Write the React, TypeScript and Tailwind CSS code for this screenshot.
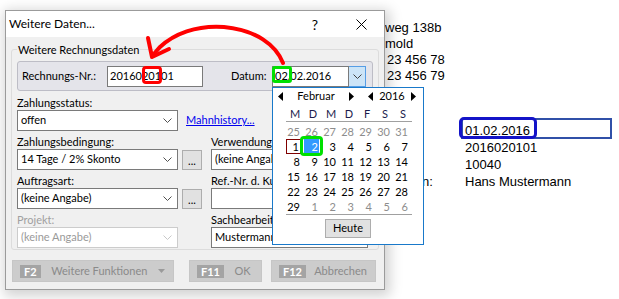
const Chevron = ({ className }: { className: string }) => (
  <svg width="9" height="5" viewBox="0 0 9 5" className={className}>
    <path d="M0.5 0.5 L4.5 4.5 L8.5 0.5" fill="none" stroke="currentColor" strokeWidth="1" />
  </svg>
);

const TriLeft = () => (
  <svg width="5" height="9" viewBox="0 0 5 9">
    <polygon points="5,0 0,4.5 5,9" fill="black" />
  </svg>
);

const TriRight = () => (
  <svg width="5" height="9" viewBox="0 0 5 9">
    <polygon points="0,0 5,4.5 0,9" fill="black" />
  </svg>
);

interface ComboProps {
  value: string;
  className: string;
  disabled?: boolean;
}

const Combo = ({ value, className, disabled = false }: ComboProps) => (
  <div
    className={`flex h-[21px] items-center border bg-white pl-[3px] pr-[5px] ${
      disabled ? 'border-[#cccccc] text-[#9a9a9a]' : 'border-[#7a7a7a] text-black'
    } ${className}`}
  >
    <span className="flex-1 truncate">{value}</span>
    <Chevron className={disabled ? 'text-[#c8c8c8]' : 'text-[#505050]'} />
  </div>
);

const DotsButton = () => (
  <div className="ml-[4px] flex h-[20px] w-[20px] items-center justify-center border border-[#adadad] bg-[#e1e1e1] pt-[2px] leading-none">
    ...
  </div>
);

const weeks = [
  [25, 26, 27, 28, 29, 30, 31],
  [1, 2, 3, 4, 5, 6, 7],
  [8, 9, 10, 11, 12, 13, 14],
  [15, 16, 17, 18, 19, 20, 21],
  [22, 23, 24, 25, 26, 27, 28],
  [29, 1, 2, 3, 4, 5, 6],
];

const Calendar = () => (
  <div className="absolute left-0 top-full z-20 flex h-[158px] w-[152px] flex-col border border-[#1979ca] bg-white">
    <div className="mt-[2px] flex h-[14px] items-center pl-[5px]">
      <TriLeft />
      <span className="w-[66px] text-center">Februar</span>
      <TriRight />
      <span className="ml-[14px] flex">
        <TriLeft />
      </span>
      <span className="w-[38px] text-center">2016</span>
      <TriRight />
    </div>

    {/* Wochentage */}
    <div className="ml-[13px] mt-[3px] grid h-[15px] w-[126px] grid-cols-7 border-b border-[#a0a0a0] leading-[14px] text-[#1c1c4c]">
      {['M', 'D', 'M', 'D', 'F', 'S', 'S'].map((d, i) => (
        <span key={i} className="text-center">
          {d}
        </span>
      ))}
    </div>

    <div className="ml-[13px] mt-[2px] w-[126px] border-b border-[#a0a0a0]">
      {weeks.map((week, w) => (
        <div key={w} className="grid h-[15px] grid-cols-7">
          {week.map((day, d) => {
            const other = w === 0 || (w === 5 && d > 0);
            const today = w === 1 && d === 0;
            const selected = w === 1 && d === 1;
            return (
              <div key={d} className="relative">
                <span
                  className={`block h-[15px] w-[15px] pr-[1px] text-right ${
                    today
                      ? 'border border-[#800000] leading-[13px]'
                      : selected
                        ? 'bg-[#3399ff] leading-[15px] text-white'
                        : other
                          ? 'leading-[15px] text-[#8d8d8d]'
                          : 'leading-[15px] text-black'
                  }`}
                >
                  {day}
                </span>
                {selected && (
                  <div className="absolute -bottom-[2px] -left-[4px] -top-[3px] right-[-1px] rounded-[4px] border-[3px] border-[#00e000]" />
                )}
              </div>
            );
          })}
        </div>
      ))}
    </div>

    <div className="mx-auto mt-[4px] flex h-[19px] w-[46px] items-center justify-center border border-[#adadad] bg-[#e1e1e1]">
      Heute
    </div>
  </div>
);

const KeyButton = ({ keyName, label, className, menu = false }: { keyName: string; label: string; className: string; menu?: boolean }) => (
  <div className={`flex h-[22px] items-center border border-[#c6c6c6] bg-[#cccccc] pl-[7px] text-[#8a8a8a] ${className}`}>
    <span className="h-[13px] bg-[#a4a4a4] px-[4px] text-[11px] font-bold leading-[13px] text-white">{keyName}</span>
    <span className="flex-1 text-center">{label}</span>
    {menu && (
      <svg width="7" height="4" viewBox="0 0 7 4" className="mr-[8px]">
        <polygon points="0,0 7,0 3.5,4" fill="#9a9a9a" />
      </svg>
    )}
  </div>
);

export default function App() {
  return (
    <div className="relative h-[299px] w-[619px] overflow-hidden bg-white">
      {/* Seite im Hintergrund */}
      <div className="pl-[385px] pt-[20px] font-[family-name:'Liberation_Sans',Arial,sans-serif] text-[13px] leading-[16px] text-black">
        <div>weg 138b</div>
        <div>mold</div>
        <div className="pl-[2px]">23 456 78</div>
        <div className="pl-[2px]">23 456 79</div>

        <div className="mt-[38px] grid grid-cols-[80px_1fr] leading-[17px]">
          <span />
          <span className="relative">
            <span className="absolute -left-[4px] -top-[4px] h-[21px] w-[151px] border-2 border-[#3050a8]" />
            <span className="absolute -left-[6px] -top-[5px] h-[22px] w-[78px] rounded-[5px] border-[3px] border-[#1414c8]" />
            <span className="relative">01.02.2016</span>
          </span>
          <span />
          <span>2016020101</span>
          <span />
          <span>10040</span>
          <span className="pl-[37px]">n:</span>
          <span>Hans Mustermann</span>
        </div>
      </div>

      {/* Dialog */}
      <div className="absolute left-[5px] top-[10px] z-10 flex h-[280px] w-[380px] flex-col border border-[#9b9b9b] bg-[#f0f0f0] font-[family-name:Lato,sans-serif] text-[11px] text-black shadow-[2px_3px_12px_3px_rgba(0,0,0,0.18)]">
        <div className="flex h-[26px] items-center bg-white pl-[3px]">
          <span className="flex-1 text-[12px]">Weitere Daten...</span>
          <span className="flex w-[46px] justify-center text-[14px]">?</span>
          <span className="flex w-[46px] justify-center">
            <svg width="11" height="11" viewBox="0 0 11 11">
              <path d="M0.5 0.5 L10.5 10.5 M10.5 0.5 L0.5 10.5" stroke="black" strokeWidth="1" />
            </svg>
          </span>
        </div>

        <fieldset className="mx-[5px] mt-[5px] rounded-[3px] border border-[#dcdcdc] px-[5px] pb-[1px]">
          <legend className="px-[1px] leading-[15px]">Weitere Rechnungsdaten</legend>

          {/* Rechnungs-Nr. / Datum */}
          <div className="mt-[4px] flex h-[30px] items-center rounded-[3px] border border-[#bdbdc6] bg-[#e4e4ea] pl-[4px]">
            <span className="w-[85px]">Rechnungs-Nr.:</span>
            <div className="relative flex h-[21px] w-[96px] items-center border border-[#7a7a7a] bg-white pl-[2px]">
              2016020101
              <div className="absolute -top-[1px] left-[34px] h-[18px] w-[20px] rounded-[4px] border-[3px] border-[#ff0000]" />
            </div>
            <span className="ml-[28px] w-[41px]">Datum:</span>
            <div className="relative flex h-[21px] w-[94px]">
              <div className="relative flex flex-1 items-center border border-[#7a7a7a] bg-white pl-[2px]">
                02.02.2016
                <div className="absolute -left-[1px] -top-[1px] h-[17px] w-[20px] rounded-[3px] border-[3px] border-[#00e000]" />
              </div>
              <div className="-ml-[1px] flex w-[18px] items-center justify-center border border-[#569de5] bg-[#cce4f7]">
                <Chevron className="text-[#404040]" />
              </div>
              <Calendar />
            </div>
          </div>

          {/* Zahlungsstatus */}
          <div className="mt-[5px] flex">
            <div className="w-[185px]">
              <div className="h-[14px] leading-[14px]">Zahlungsstatus:</div>
              <div className="flex items-center">
                <Combo value="offen" className="w-[161px] shrink-0" />
                <span className="ml-[8px] whitespace-nowrap text-[#0000ee] underline">Mahnhistory...</span>
              </div>
            </div>
          </div>

          {/* Zahlungsbedingung / Verwendung */}
          <div className="mt-[4px] flex">
            <div className="w-[185px]">
              <div className="h-[14px] leading-[14px]">Zahlungsbedingung:</div>
              <div className="flex items-center">
                <Combo value="14 Tage / 2% Skonto" className="w-[161px]" />
                <DotsButton />
              </div>
            </div>
            <div className="ml-[9px] w-[157px]">
              <div className="h-[14px] leading-[14px]">Verwendung:</div>
              <Combo value="(keine Angabe)" className="w-[157px]" />
            </div>
          </div>

          {/* Auftragsart / Ref.-Nr. */}
          <div className="mt-[4px] flex">
            <div className="w-[185px]">
              <div className="h-[14px] leading-[14px]">Auftragsart:</div>
              <div className="flex items-center">
                <Combo value="(keine Angabe)" className="w-[161px]" />
                <DotsButton />
              </div>
            </div>
            <div className="ml-[9px] w-[157px]">
              <div className="h-[14px] whitespace-nowrap leading-[14px]">Ref.-Nr. d. Kunden:</div>
              <div className="h-[21px] border border-[#7a7a7a] bg-white" />
            </div>
          </div>

          {/* Projekt / Sachbearbeiter */}
          <div className="mt-[4px] flex">
            <div className="w-[185px]">
              <div className="h-[14px] leading-[14px] text-[#a0a0a0]">Projekt:</div>
              <Combo value="(keine Angabe)" className="w-[161px]" disabled />
            </div>
            <div className="ml-[9px] w-[157px]">
              <div className="h-[14px] leading-[14px]">Sachbearbeiter:</div>
              <Combo value="Mustermann" className="w-[157px]" />
            </div>
          </div>
        </fieldset>

        <div className="ml-[6px] mt-[10px] flex">
          <KeyButton keyName="F2" label="Weitere Funktionen" className="w-[162px]" menu />
          <KeyButton keyName="F11" label="OK" className="ml-[15px] w-[73px]" />
          <KeyButton keyName="F12" label="Abbrechen" className="ml-[9px] w-[105px]" />
        </div>
      </div>

      {/* roter Pfeil */}
      <svg className="pointer-events-none absolute left-0 top-0 z-30" width="619" height="299" viewBox="0 0 619 299">
        <path
          d="M283 63 C 276 45, 256 30, 224 27 C 196 25, 174 34, 160 47 L 153 55"
          fill="none"
          stroke="#ff0000"
          strokeWidth="4"
          strokeLinecap="round"
        />
        <path d="M148 38 L 152 57 L 169 49" fill="none" stroke="#ff0000" strokeWidth="4" strokeLinecap="round" strokeLinejoin="round" />
      </svg>
    </div>
  );
}
